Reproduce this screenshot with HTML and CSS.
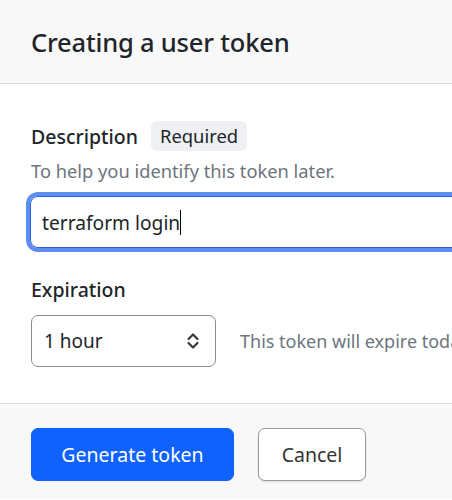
FILE: index.html
```html
<!DOCTYPE html>
<html>
<head>
<meta charset="utf-8">
<link rel="stylesheet" href="styles.css">
</head>
<body>
<div class="modal">
  <div class="modal-header">
    <h1 class="title">Creating a user token</h1>
  </div>
  <div class="modal-body">
    <div class="field">
      <div class="label-row">
        <span class="label">Description</span>
        <span class="badge">Required</span>
      </div>
      <div class="help">To help you identify this token later.</div>
      <div class="input focused"><span>terraform login</span><span class="caret"></span></div>
    </div>
    <div class="field field-exp">
      <div class="label-row"><span class="label">Expiration</span></div>
      <div class="exp-row">
        <div class="select">
          <span>1 hour</span>
          <svg class="chev" width="14" height="20" viewBox="0 0 14 20"><path d="M2.5 8 L7 3.5 L11.5 8 M2.5 12 L7 16.5 L11.5 12" fill="none" stroke="#343a40" stroke-width="2.2" stroke-linecap="round" stroke-linejoin="round"/></svg>
        </div>
        <span class="exp-note">This token will expire today at 3:45 PM.</span>
      </div>
    </div>
  </div>
  <div class="modal-footer">
    <button class="btn btn-primary">Generate token</button>
    <button class="btn btn-secondary">Cancel</button>
  </div>
</div>
</body>
</html>
```
FILE: styles.css
```css
html, body { margin: 0; padding: 0; background: #fff; }
body { overflow: hidden; width: 452px; height: 500px; font-family: "Noto Sans", "Open Sans", sans-serif; color: #212529; }
.modal { width: 640px; }
.modal-header {
  height: 84px; box-sizing: border-box; background: #f8f8f8;
  border-bottom: 1px solid #dcdcdc; display: flex; align-items: center; padding-left: 31px;
}
.title { margin: 0; font-size: 25.5px; font-weight: 500; letter-spacing: -0.2px; }
.modal-body { padding: 37px 0 36px 31px; }
.label-row { display: flex; align-items: center; gap: 13px; height: 30px; }
.label { font-size: 19.5px; font-weight: 500; }
.badge { background: #eef0f3; border-radius: 6px; padding: 0 9px; height: 30px; line-height: 30px; font-size: 18.4px; color: #212529; }
.help { font-size: 18.3px; color: #6c757d; margin-top: 7px; line-height: 26px; white-space: nowrap; }
.input {
  margin-top: 12px; margin-left: -1px; height: 52px; box-sizing: border-box;
  border: 1px solid #2a62d6; border-radius: 8px; box-shadow: 0 0 0 4px #5b8ef0;
  display: flex; align-items: center; padding-left: 11px; font-size: 19.2px;
}
.caret { display: inline-block; width: 1px; height: 25px; background: #000; }
.field-exp { margin-top: 26px; }
.exp-row { display: flex; align-items: center; margin-top: 11px; }
.select {
  width: 185px; height: 52px; box-sizing: border-box; border: 1px solid #8c8c8c; border-radius: 7px;
  display: flex; align-items: center; justify-content: space-between; padding: 0 15px 0 12px; font-size: 19px;
}
.exp-note { margin-left: 24px; font-size: 18px; color: #6c757d; white-space: nowrap; }
.modal-footer {
  background: #f8f8f8; border-top: 1px solid #dcdcdc; height: 96px; box-sizing: border-box;
  display: flex; align-items: flex-start; gap: 24px; padding: 24px 0 0 31px;
}
.btn { font-family: inherit; font-size: 19.5px; height: 53px; border-radius: 7px; padding: 0; cursor: pointer; }
.btn-primary { background: #0f62fe; color: #fff; border: 1px solid #0f62fe; width: 203px; }
.btn-secondary { background: #fff; color: #333; border: 1px solid #9a9a9a; width: 108px; box-shadow: 0 1px 2px rgba(0,0,0,0.12); }
```
